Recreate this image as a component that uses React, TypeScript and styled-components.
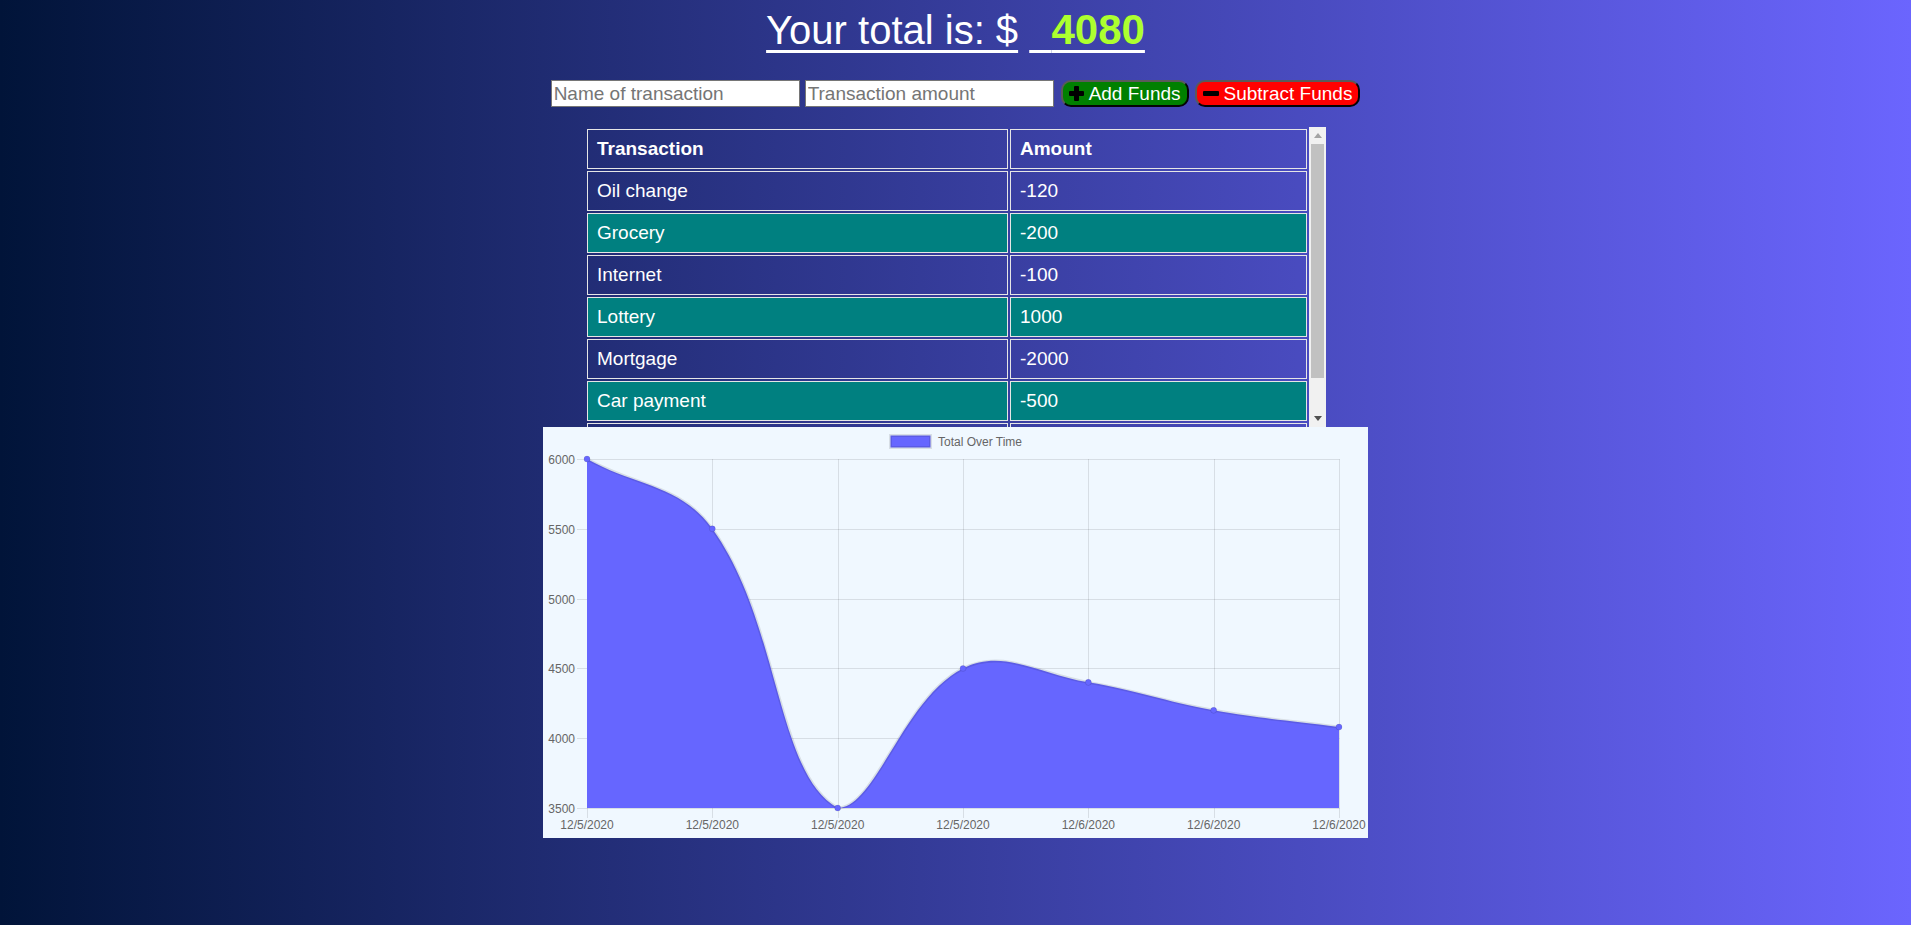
import React from "react";
import styled, { createGlobalStyle } from "styled-components";

const GlobalStyle = createGlobalStyle`
  html, body {
    margin: 0;
    padding: 0;
  }
  body {
    min-height: 100vh;
    background: linear-gradient(to right, #011439, #6b65fe);
    font-family: "Liberation Sans", Arial, sans-serif;
    color: #ffffff;
  }
  * { box-sizing: border-box; }
`;

const Page = styled.div`
  min-height: 100vh;
  display: flex;
  flex-direction: column;
  align-items: center;
  padding-top: 7px;
`;

const Title = styled.h1`
  margin: 0;
  font-size: 40px;
  line-height: 46px;
  font-weight: normal;
  color: #ffffff;
  white-space: pre;
`;

const Underlined = styled.span`
  text-decoration: underline;
  text-decoration-thickness: 3px;
  text-underline-offset: 6px;
`;

const TotalValue = styled.span`
  font-weight: bold;
  font-size: 42px;
  color: #adff2f;
`;

const FormRow = styled.div`
  display: flex;
  align-items: center;
  margin-top: 27px;
`;

const TextInput = styled.input<{ $gap: number }>`
  width: 249px;
  height: 27px;
  margin-right: ${(p) => p.$gap}px;
  padding: 1px 2px;
  border: 1px solid #767676;
  border-radius: 0;
  background: #ffffff;
  font-family: "Liberation Sans", Arial, sans-serif;
  font-size: 19px;
  color: #000;
  &::placeholder {
    color: #757575;
  }
`;

const FundsButton = styled.button<{ $bg: string; $gap: number }>`
  display: flex;
  align-items: center;
  gap: 5px;
  height: 27px;
  margin-right: ${(p) => p.$gap}px;
  padding: 0 6px;
  border: 2px outset #5a5a5a;
  border-radius: 10px;
  background: ${(p) => p.$bg};
  color: #ffffff;
  font-family: "Liberation Sans", Arial, sans-serif;
  font-size: 19px;
  line-height: 22px;
  cursor: pointer;
`;

const ScrollFrame = styled.div`
  display: flex;
  width: 741px;
  height: 300px;
  margin-top: 20px;
`;

const TableViewport = styled.div`
  flex: 1;
  min-width: 0;
  overflow: hidden;
`;

const ScrollTrack = styled.div`
  width: 17px;
  display: flex;
  flex-direction: column;
  background: #f1f1f1;
`;

const ScrollButton = styled.div`
  height: 17px;
  display: flex;
  align-items: center;
  justify-content: center;
  flex-shrink: 0;
`;

const ScrollThumb = styled.div`
  height: 234px;
  margin: 0 2px;
  background: #c1c1c1;
  flex-shrink: 0;
`;

const ScrollSpacer = styled.div`
  flex: 1;
`;

const Table = styled.table`
  width: 100%;
  table-layout: fixed;
  border-spacing: 2px;
  color: #ffffff;
  font-size: 19px;
`;

const HeadCell = styled.th<{ $width?: string }>`
  width: ${(p) => p.$width || "auto"};
  border: 1px solid #e6e6e6;
  padding: 8px 9px;
  line-height: 22px;
  text-align: left;
  font-weight: bold;
`;

const Row = styled.tr<{ $teal: boolean }>`
  background: ${(p) => (p.$teal ? "#008080" : "transparent")};
`;

const Cell = styled.td`
  border: 1px solid #e6e6e6;
  padding: 8px 9px;
  line-height: 22px;
  text-align: left;
`;

const ChartBox = styled.div`
  width: 825px;
  height: 411px;
  background: #f0f8ff;
`;

const ChartSvg = styled.svg`
  display: block;
  font-family: "Liberation Sans", Arial, sans-serif;
`;

const PlusIcon = () => (
  <svg width="15" height="15" viewBox="0 0 15 15">
    <rect x="5" y="0" width="5" height="15" rx="1" fill="#000" />
    <rect x="0" y="5" width="15" height="5" rx="1" fill="#000" />
  </svg>
);

const MinusIcon = () => (
  <svg width="16" height="15" viewBox="0 0 16 15">
    <rect x="0" y="5" width="16" height="5" rx="1" fill="#000" />
  </svg>
);

const ArrowUp = () => (
  <svg width="8" height="5" viewBox="0 0 8 5">
    <polygon points="0,5 4,0 8,5" fill="#a3a3a3" />
  </svg>
);

const ArrowDown = () => (
  <svg width="8" height="5" viewBox="0 0 8 5">
    <polygon points="0,0 8,0 4,5" fill="#505050" />
  </svg>
);

const transactions: [string, string][] = [
  ["Oil change", "-120"],
  ["Grocery", "-200"],
  ["Internet", "-100"],
  ["Lottery", "1000"],
  ["Mortgage", "-2000"],
  ["Car payment", "-500"],
  ["Paycheck", "6000"],
];

const W = 825;
const H = 411;
const LEFT = 44;
const RIGHT = 796;
const TOP = 32;
const BOTTOM = 381;
const MIN = 3500;
const MAX = 6000;
const values = [6000, 5500, 3500, 4500, 4400, 4200, 4080];
const xLabels = ["12/5/2020", "12/5/2020", "12/5/2020", "12/5/2020", "12/6/2020", "12/6/2020", "12/6/2020"];
const yTicks = [6000, 5500, 5000, 4500, 4000, 3500];

type Pt = { x: number; y: number };

const yOf = (v: number) => TOP + ((MAX - v) / (MAX - MIN)) * (BOTTOM - TOP);
const xOf = (i: number) => LEFT + (i * (RIGHT - LEFT)) / (values.length - 1);

const clamp = (v: number, a: number, b: number) => Math.max(a, Math.min(b, v));

function buildCurve(points: Pt[]) {
  const t = 0.4;
  const cps = points.map((cur, i) => {
    const prev = points[i - 1] || cur;
    const next = points[i + 1] || cur;
    const d01 = Math.hypot(cur.x - prev.x, cur.y - prev.y);
    const d12 = Math.hypot(next.x - cur.x, next.y - cur.y);
    let s01 = d01 / (d01 + d12);
    let s12 = d12 / (d01 + d12);
    if (isNaN(s01)) s01 = 0;
    if (isNaN(s12)) s12 = 0;
    const fa = t * s01;
    const fb = t * s12;
    const cap = (p: Pt) => ({ x: clamp(p.x, LEFT, RIGHT), y: clamp(p.y, TOP, BOTTOM) });
    return {
      prev: cap({ x: cur.x - fa * (next.x - prev.x), y: cur.y - fa * (next.y - prev.y) }),
      next: cap({ x: cur.x + fb * (next.x - prev.x), y: cur.y + fb * (next.y - prev.y) }),
    };
  });
  let d = `M${points[0].x},${points[0].y}`;
  for (let i = 1; i < points.length; i++) {
    const a = cps[i - 1].next;
    const b = cps[i].prev;
    d += ` C${a.x},${a.y} ${b.x},${b.y} ${points[i].x},${points[i].y}`;
  }
  return d;
}

const TotalChart = () => {
  const points = values.map((v, i) => ({ x: xOf(i), y: yOf(v) }));
  const curve = buildCurve(points);
  const area = `${curve} L${RIGHT},${BOTTOM} L${LEFT},${BOTTOM} Z`;
  const grid = "rgba(0,0,0,0.1)";
  return (
    <ChartSvg width={W} height={H} viewBox={`0 0 ${W} ${H}`}>
      <rect x="347.5" y="8.5" width="40" height="12" fill="#6666ff" stroke={grid} strokeWidth="3" />
      <text x="395" y="19" fontSize="12" fill="#666">
        Total Over Time
      </text>
      {yTicks.map((v) => {
        const y = Math.round(yOf(v)) + 0.5;
        return (
          <g key={v}>
            <line x1={34} x2={RIGHT + 0.5} y1={y} y2={y} stroke={grid} strokeWidth="1" />
            <text x={32} y={y + 4} fontSize="12" fill="#666" textAnchor="end">
              {v}
            </text>
          </g>
        );
      })}
      {points.map((p, i) => {
        const x = Math.round(p.x) + 0.5;
        return (
          <g key={i}>
            <line x1={x} x2={x} y1={TOP} y2={BOTTOM + 10} stroke={grid} strokeWidth="1" />
            <text x={p.x} y={402} fontSize="12" fill="#666" textAnchor="middle">
              {xLabels[i]}
            </text>
          </g>
        );
      })}
      <path d={area} fill="#6666ff" />
      <path d={curve} fill="none" stroke={grid} strokeWidth="3" />
      {points.map((p, i) => (
        <circle key={i} cx={p.x} cy={p.y} r="3" fill="#6666ff" stroke={grid} strokeWidth="1" />
      ))}
    </ChartSvg>
  );
};

export default function App() {
  return (
    <>
      <GlobalStyle />
      <Page>
        <Title>
          <Underlined>Your total is: $</Underlined>
          {" "}
          <Underlined>
            {"\u00a0\u00a0"}
            <TotalValue>4080</TotalValue>
          </Underlined>
        </Title>
        <FormRow>
          <TextInput $gap={5} type="text" placeholder="Name of transaction" />
          <TextInput $gap={7} type="number" placeholder="Transaction amount" />
          <FundsButton $bg="#008000" $gap={6}>
            <PlusIcon />
            Add Funds
          </FundsButton>
          <FundsButton $bg="#ff0000" $gap={0}>
            <MinusIcon />
            Subtract Funds
          </FundsButton>
        </FormRow>
        <ScrollFrame>
          <TableViewport>
            <Table>
              <thead>
                <tr>
                  <HeadCell $width="421px">Transaction</HeadCell>
                  <HeadCell>Amount</HeadCell>
                </tr>
              </thead>
              <tbody>
                {transactions.map(([name, amount], i) => (
                  <Row key={name} $teal={i % 2 === 1}>
                    <Cell>{name}</Cell>
                    <Cell>{amount}</Cell>
                  </Row>
                ))}
              </tbody>
            </Table>
          </TableViewport>
          <ScrollTrack>
            <ScrollButton>
              <ArrowUp />
            </ScrollButton>
            <ScrollThumb />
            <ScrollSpacer />
            <ScrollButton>
              <ArrowDown />
            </ScrollButton>
          </ScrollTrack>
        </ScrollFrame>
        <ChartBox>
          <TotalChart />
        </ChartBox>
      </Page>
    </>
  );
}
